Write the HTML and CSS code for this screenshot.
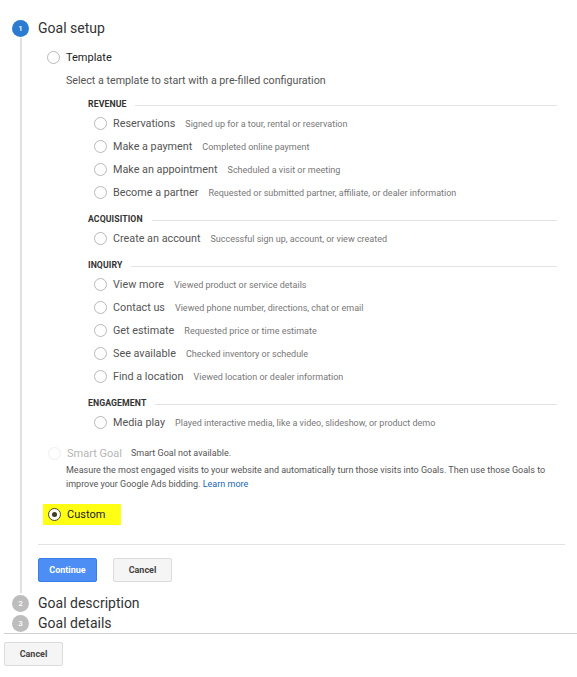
FILE: index.html
```html
<!DOCTYPE html>
<html>
<head>
<meta charset="utf-8">
<link rel="stylesheet" href="styles.css">
</head>
<body>
<div class="page">
  <div class="step-head first">
    <span class="num active">1</span>
    <span class="step-title">Goal setup</span>
  </div>
  <div class="step-body">
    <div class="choice template-row">
      <span class="radio"></span>
      <span class="choice-label">Template</span>
    </div>
    <div class="hint">Select a template to start with a pre-filled configuration</div>

    <div class="groups">
      <div class="group-head"><span class="group-name">REVENUE</span><span class="group-line"></span></div>
      <div class="opt"><span class="radio"></span><span class="opt-name">Reservations</span><span class="opt-desc">Signed up for a tour, rental or reservation</span></div>
      <div class="opt"><span class="radio"></span><span class="opt-name">Make a payment</span><span class="opt-desc">Completed online payment</span></div>
      <div class="opt"><span class="radio"></span><span class="opt-name">Make an appointment</span><span class="opt-desc">Scheduled a visit or meeting</span></div>
      <div class="opt"><span class="radio"></span><span class="opt-name">Become a partner</span><span class="opt-desc">Requested or submitted partner, affiliate, or dealer information</span></div>

      <div class="group-head"><span class="group-name">ACQUISITION</span><span class="group-line"></span></div>
      <div class="opt"><span class="radio"></span><span class="opt-name">Create an account</span><span class="opt-desc">Successful sign up, account, or view created</span></div>

      <div class="group-head"><span class="group-name">INQUIRY</span><span class="group-line"></span></div>
      <div class="opt"><span class="radio"></span><span class="opt-name">View more</span><span class="opt-desc">Viewed product or service details</span></div>
      <div class="opt"><span class="radio"></span><span class="opt-name">Contact us</span><span class="opt-desc">Viewed phone number, directions, chat or email</span></div>
      <div class="opt"><span class="radio"></span><span class="opt-name">Get estimate</span><span class="opt-desc">Requested price or time estimate</span></div>
      <div class="opt"><span class="radio"></span><span class="opt-name">See available</span><span class="opt-desc">Checked inventory or schedule</span></div>
      <div class="opt"><span class="radio"></span><span class="opt-name">Find a location</span><span class="opt-desc">Viewed location or dealer information</span></div>

      <div class="group-head"><span class="group-name">ENGAGEMENT</span><span class="group-line"></span></div>
      <div class="opt"><span class="radio"></span><span class="opt-name">Media play</span><span class="opt-desc">Played interactive media, like a video, slideshow, or product demo</span></div>
    </div>

    <div class="choice smart-row">
      <span class="radio disabled"></span>
      <span class="choice-label muted">Smart Goal</span>
      <span class="smart-note">Smart Goal not available.</span>
    </div>
    <p class="smart-desc">Measure the most engaged visits to your website and automatically turn those visits into Goals. Then use those Goals to improve your Google Ads bidding. <span class="link">Learn more</span></p>

    <div class="custom-wrap">
      <div class="choice custom-row">
        <span class="radio checked"></span>
        <span class="choice-label">Custom</span>
      </div>
    </div>

    <div class="divider"></div>

    <div class="actions">
      <button class="btn primary">Continue</button>
      <button class="btn">Cancel</button>
    </div>
  </div>

  <div class="step-head">
    <span class="num">2</span>
    <span class="step-title">Goal description</span>
  </div>
  <div class="step-head">
    <span class="num">3</span>
    <span class="step-title">Goal details</span>
  </div>

  <div class="footer">
    <button class="btn">Cancel</button>
  </div>
</div>
</body>
</html>
```

FILE: styles.css
```css
* { box-sizing: border-box; }

body {
  margin: 0;
  background: #fff;
  font-family: Roboto, "Noto Sans", Arial, sans-serif;
  color: #333;
}

.page {
  width: 577px;
}

.step-head {
  display: flex;
  align-items: center;
  height: 20px;
  padding-left: 12px;
}
.step-head.first {
  margin-top: 18px;
}

.num {
  width: 17px;
  height: 17px;
  border-radius: 50%;
  background: #bdbdbd;
  color: #fff;
  font-size: 8px;
  font-weight: 500;
  display: flex;
  align-items: center;
  justify-content: center;
  flex: none;
}
.num.active {
  background: #2a7bd1;
}

.step-title {
  margin-left: 9px;
  font-size: 14px;
  color: #333;
}

.step-body {
  margin-left: 20px;
  border-left: 2px solid #e0e0e0;
  padding: 8px 12px 11px 26px;
}

.radio {
  width: 13px;
  height: 13px;
  border-radius: 50%;
  border: 1px solid #b9b9b9;
  background: #fff;
  flex: none;
  display: flex;
  align-items: center;
  justify-content: center;
}
.radio.disabled {
  border-color: #efefef;
}
.radio.checked {
  border-color: #4a4a2a;
}
.radio.checked::after {
  content: "";
  width: 5px;
  height: 5px;
  border-radius: 50%;
  background: #3d3d1f;
}

.choice {
  display: flex;
  align-items: center;
}
.template-row {
  height: 22px;
  margin-left: -1px;
}
.choice-label {
  margin-left: 6px;
  font-size: 11px;
  color: #222;
}
.choice-label.muted {
  color: #b5b5b5;
}

.hint {
  height: 22px;
  line-height: 22px;
  margin-top: 2px;
  padding-left: 18px;
  font-size: 10.7px;
  color: #555;
}

.groups {
  margin-left: 40px;
  margin-right: 8px;
}

.group-head {
  display: flex;
  align-items: center;
  height: 17px;
  margin-top: 6px;
}
.group-head:first-child {
  margin-top: 3px;
}
.group-name {
  font-size: 8.7px;
  font-weight: 700;
  color: #333;
  letter-spacing: 0.1px;
}
.group-line {
  flex: 1;
  height: 1px;
  background: #e3e3e3;
  margin-left: 9px;
  margin-top: 4px;
}

.opt {
  display: flex;
  align-items: center;
  height: 23px;
  padding-left: 6px;
}
.opt-name {
  margin-left: 6px;
  font-size: 10.8px;
  color: #555;
}
.opt-desc {
  margin-left: 10px;
  font-size: 9px;
  color: #777;
}

.smart-row {
  height: 20px;
  margin-top: 9px;
}
.smart-note {
  margin-left: 9px;
  font-size: 9px;
  color: #555;
}
.smart-desc {
  margin: 0;
  padding-left: 18px;
  font-size: 9px;
  line-height: 14px;
  color: #555;
}
.link {
  color: #1a66b8;
}

.custom-wrap {
  display: flex;
  margin-top: 13px;
  margin-left: -5px;
}
.custom-row {
  background: #ffff14;
  height: 21px;
  padding: 0 16px 0 5px;
}
.custom-row .choice-label {
  color: #222;
}

.divider {
  margin-top: 19px;
  margin-left: -10px;
  height: 1px;
  background: #e3e3e3;
}

.actions {
  display: flex;
  gap: 16px;
  margin-top: 13px;
  margin-left: -10px;
}

.btn {
  width: 59px;
  height: 24px;
  border: 1px solid #dcdcdc;
  border-radius: 2px;
  background: #f5f5f5;
  color: #444;
  font-family: Roboto, Arial, sans-serif;
  font-size: 9px;
  font-weight: 700;
  padding: 0;
}
.btn.primary {
  background: #4d8ef5;
  border-color: #3b7de8;
  color: #fff;
}

.footer {
  margin-top: 0;
  margin-left: 4px;
  border-top: 1px solid #cfcfcf;
  padding-top: 8px;
}
```
